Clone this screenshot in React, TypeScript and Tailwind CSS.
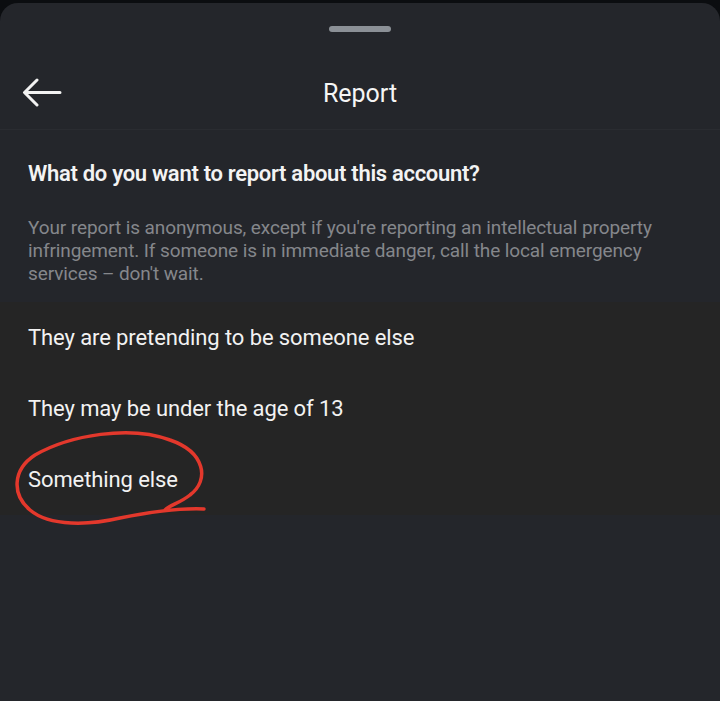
import React from "react";

export default function App() {
  const font = { fontFamily: "Roboto, 'Noto Sans', sans-serif" };
  return (
    <div className="w-[720px] h-[701px] bg-[#0b0d10] overflow-hidden" style={font}>
      <div className="mt-[3px] h-[698px] rounded-t-[18px] bg-[#24262b] flex flex-col">
        <div className="flex justify-center pt-[23px]">
          <div className="w-[62px] h-[6px] rounded-full bg-[#8b9096]" />
        </div>
        <div className="relative h-[98px] pt-[26px] flex items-center justify-center border-b border-[#2a2c31]">
          <svg
            className="absolute left-[22px] top-[46px]"
            width="40"
            height="30"
            viewBox="0 0 40 30"
            fill="none"
            stroke="#f2f2f2"
            strokeWidth="3"
            strokeLinecap="round"
            strokeLinejoin="round"
          >
            <path d="M38 14.5 H3 M15 2 L2.5 14.5 L15 27" />
          </svg>
          <span className="text-[25px] leading-[30px] text-[#f5f5f5]">Report</span>
        </div>
        <div className="px-[28px] pt-[30px] pb-[17px]">
          <h1 className="text-[22px] font-semibold text-[#f3f3f3] leading-[28px] tracking-[-0.3px]">
            What do you want to report about this account?
          </h1>
          <p className="mt-[28px] text-[19px] leading-[23px] text-[#85878b] tracking-[-0.1px]">
            Your report is anonymous, except if you're reporting an intellectual property infringement. If someone is in immediate danger, call the local emergency services – don't wait.
          </p>
        </div>
        <div className="relative bg-[#252525]">
          {["They are pretending to be someone else", "They may be under the age of 13", "Something else"].map((t) => (
            <div key={t} className="h-[71px] flex items-center px-[28px] text-[22px] text-[#f2f2f2] tracking-[-0.1px]">
              {t}
            </div>
          ))}
          <svg className="absolute left-0 top-[-302px] pointer-events-none" width="720" height="701" viewBox="0 0 720 701" fill="none">
            <path
              d="M204 509 C180 508 150 512 120 518 C90 525 50 527 30 510 C12 495 12 470 35 455 C70 435 130 425 170 440 C205 452 210 480 190 495 C180 503 170 505 165 510"
              stroke="#e3382c"
              strokeWidth="3.5"
              strokeLinecap="round"
              strokeLinejoin="round"
            />
          </svg>
        </div>
        <div className="flex-1" />
      </div>
    </div>
  );
}
